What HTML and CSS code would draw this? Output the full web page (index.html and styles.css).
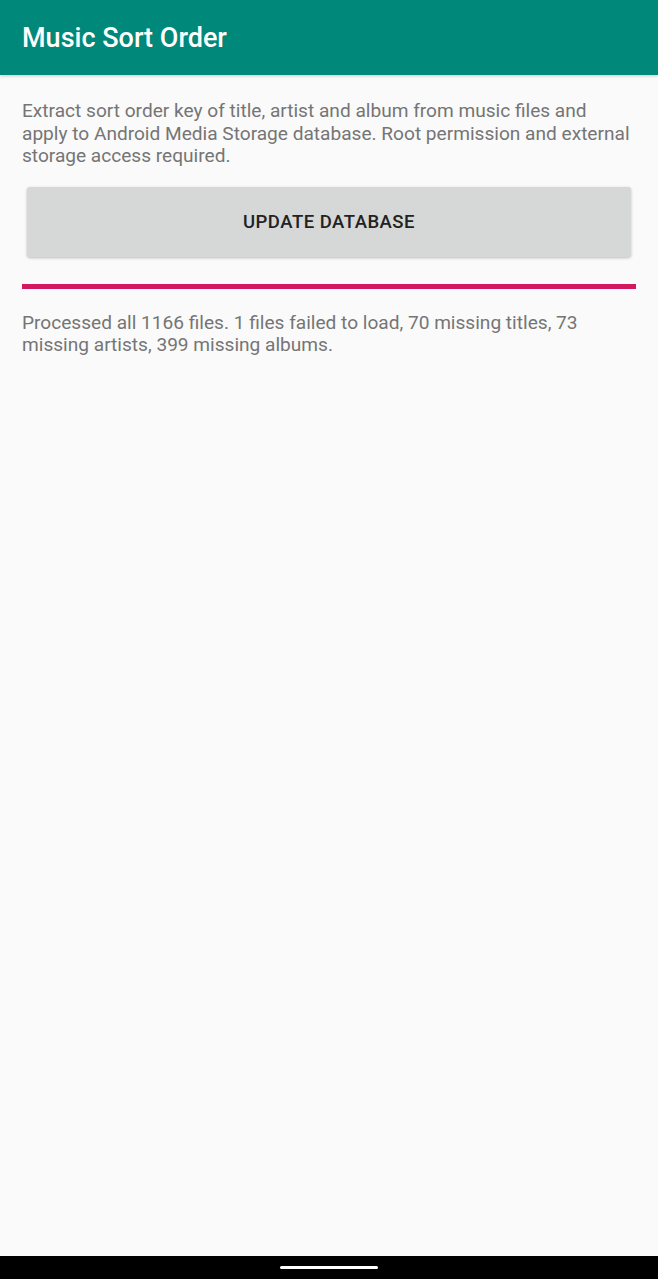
FILE: index.html
```html
<!DOCTYPE html>
<html>
<head>
<meta charset="utf-8">
<link rel="stylesheet" href="styles.css">
</head>
<body>
<div class="screen">
  <header class="appbar"><h1 class="title">Music Sort Order</h1></header>
  <main class="content">
    <p class="desc">Extract sort order key of title, artist and album from music files and apply to Android Media Storage database. Root permission and external storage access required.</p>
    <button class="btn">UPDATE DATABASE</button>
    <div class="progress"></div>
    <p class="result">Processed all 1166 files. 1 files failed to load, 70 missing titles, 73 missing artists, 399 missing albums.</p>
  </main>
  <footer class="navbar"><div class="handle"></div></footer>
</div>
</body>
</html>
```
FILE: styles.css
```css
html, body { margin: 0; padding: 0; }
body { font-family: Roboto, "Noto Sans", sans-serif; background: #fafafa; }
.screen { width: 658px; height: 1279px; display: flex; flex-direction: column; }
.appbar { height: 75px; background: #00887a; display: flex; align-items: center; padding: 0 22px; box-shadow: 0 1px 3px rgba(0,0,0,0.2); }
.title { margin: 0; color: #fff; font-size: 27px; font-weight: 500; }
.content { flex: 1; padding: 0 22px; }
.desc { margin: 25px 0 0; color: #757575; font-size: 19.1px; line-height: 22.6px; }
.btn { display: block; margin: 19px 5px 0; width: calc(100% - 10px); height: 70px; border: none; border-radius: 3px; background: #d6d7d7; color: #222; font-family: Roboto, sans-serif; font-size: 18.5px; letter-spacing: 0.5px; font-weight: 500; box-shadow: 0 1px 3px rgba(0,0,0,0.25); }
.progress { margin-top: 27px; height: 5px; background: #d2195f; }
.result { margin: 23px 0 0; color: #757575; font-size: 19.1px; line-height: 22.6px; }
.navbar { height: 23px; background: #000; display: flex; justify-content: center; align-items: center; }
.handle { width: 98px; height: 3px; background: #fff; border-radius: 2px; }
```
